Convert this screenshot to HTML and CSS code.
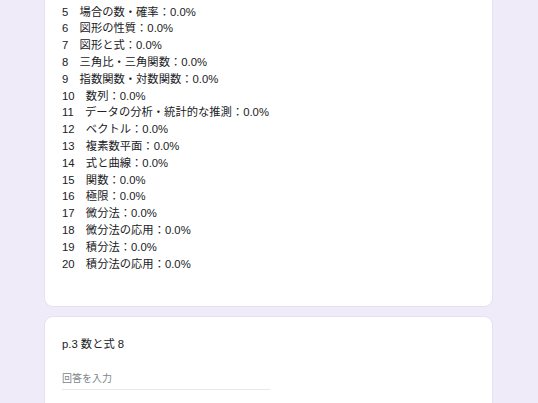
FILE: index.html
```html
<!DOCTYPE html>
<html lang="ja">
  <head>
    <meta charset="utf-8">
    <title>回答</title>
    <link rel="stylesheet" href="styles.css">
  </head>
  <body>
    <div class="page">
      <div class="card result">
        <div class="row">4　データの分析：0.0%</div>
        <div class="row">5　場合の数・確率：0.0%</div>
        <div class="row">6　図形の性質：0.0%</div>
        <div class="row">7　図形と式：0.0%</div>
        <div class="row">8　三角比・三角関数：0.0%</div>
        <div class="row">9　指数関数・対数関数：0.0%</div>
        <div class="row">10　数列：0.0%</div>
        <div class="row">11　データの分析・統計的な推測：0.0%</div>
        <div class="row">12　ベクトル：0.0%</div>
        <div class="row">13　複素数平面：0.0%</div>
        <div class="row">14　式と曲線：0.0%</div>
        <div class="row">15　関数：0.0%</div>
        <div class="row">16　極限：0.0%</div>
        <div class="row">17　微分法：0.0%</div>
        <div class="row">18　微分法の応用：0.0%</div>
        <div class="row">19　積分法：0.0%</div>
        <div class="row">20　積分法の応用：0.0%</div>
      </div>
      <div class="card question">
        <div class="title">p.3 数と式 8</div>
        <div class="answer">回答を入力</div>
      </div>
    </div>
  </body>
</html>
```

FILE: styles.css
```css
body {
  margin: 0;
  padding: 0;
  background: #f0ebf8;
  font-family: "Liberation Sans", "Noto Sans CJK JP", sans-serif;
  color: #202124;
}

.page {
  width: 447px;
  margin: -37.6px 0 0 45px;
  display: flex;
  flex-direction: column;
  gap: 11px;
}

.card {
  background: #fff;
  border-radius: 8px;
  box-shadow: 0 0 0 1px #e6e1ef;
  padding: 24px 17px;
}

.result {
  padding-top: 24.4px;
  padding-bottom: 33.6px;
}

.row {
  font-size: 11.3px;
  line-height: 16.8px;
}

.question {
  padding-top: 19px;
  height: 120px;
}

.title {
  font-size: 11.3px;
  line-height: 16px;
}

.answer {
  margin-top: 20px;
  width: 208px;
  font-size: 10px;
  line-height: 14px;
  color: #80868b;
  padding-bottom: 3px;
  border-bottom: 1px solid #e8e8ec;
}
```
